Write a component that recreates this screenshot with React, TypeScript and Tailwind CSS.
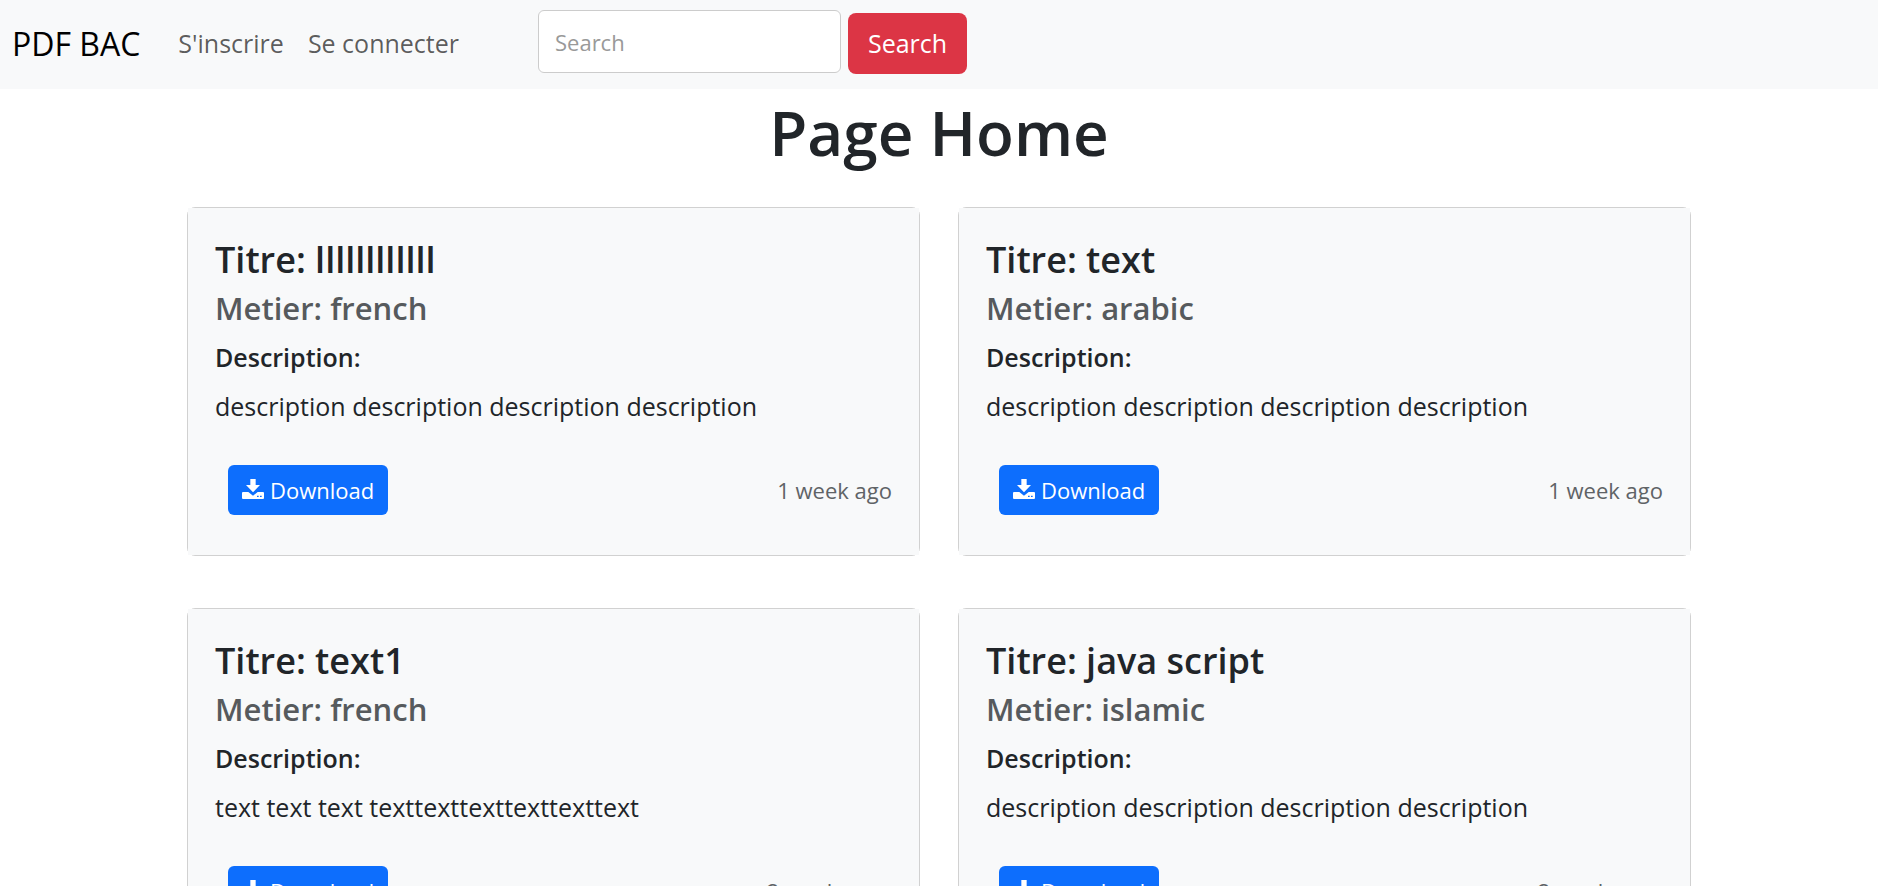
interface Doc {
  title: string;
  subject: string;
  description: string;
  age: string;
}

const docs: Doc[] = [
  { title: "llllllllllll", subject: "french", description: "description description description description", age: "1 week ago" },
  { title: "text", subject: "arabic", description: "description description description description", age: "1 week ago" },
  { title: "text1", subject: "french", description: "text text text texttexttexttexttexttext", age: "2 weeks ago" },
  { title: "java script", subject: "islamic", description: "description description description description", age: "2 weeks ago" },
];

function DownloadIcon() {
  return (
    <svg viewBox="0 0 66 60" className="-mt-[2px] h-5 w-[22px]" fill="currentColor" aria-hidden="true">
      <path d="M25 0h16v18h13L33 40 12 18h13z" />
      <path
        fillRule="evenodd"
        d="M3 39h16l14 11 14-11h16a3 3 0 0 1 3 3v15a3 3 0 0 1-3 3H3a3 3 0 0 1-3-3V42a3 3 0 0 1 3-3zM45 50v4h5v-4zM54 50v4h5v-4z"
      />
    </svg>
  );
}

function Navbar() {
  return (
    <nav className="flex items-center bg-[#f8f9fa] px-3 pt-[7px] pb-[9px]">
      <a href="#" className="text-[32px] leading-[73px] text-black">PDF BAC</a>
      <ul className="ml-[38px] flex gap-6 text-[25px] text-black/65">
        <li><a href="#">S'inscrire</a></li>
        <li><a href="#">Se connecter</a></li>
      </ul>
      <form className="ml-[79px] flex items-center gap-[7px]">
        <input
          type="search"
          aria-label="Search"
          placeholder="Search"
          className="mb-1 h-[63px] w-[303px] rounded-md border border-[#cccccc] bg-white px-4 text-[22px] placeholder:text-[#999999]"
        />
        <button type="button" className="h-[61px] rounded-lg bg-[#dc3545] px-5 text-[25px] text-white">Search</button>
      </form>
    </nav>
  );
}

function DocCard({ doc }: { doc: Doc }) {
  return (
    <article className="rounded-lg border border-black/18">
      <div className="bg-[#f8f9fa] px-[27px] pt-[27px] pb-10">
        <h2 className="text-[36px] leading-[49px] font-semibold">Titre: {doc.title}</h2>
        <h3 className="text-[31px] leading-[49px] font-semibold text-[#565a5d]">Metier: {doc.subject}</h3>
        <h4 className="text-[25px] leading-[49px] font-semibold">Description:</h4>
        <p className="text-[25px] leading-[49px]">{doc.description}</p>
        <div className="mt-[34px] flex items-center justify-between pl-[13px]">
          <button type="button" className="flex h-[50px] items-center gap-[6px] rounded-md bg-[#0d6efd] px-[14px] text-[22px] text-white">
            <DownloadIcon />
            Download
          </button>
          <span className="text-[22px] text-[#5f6366]">{doc.age}</span>
        </div>
      </div>
    </article>
  );
}

export default function App() {
  return (
    <div className="min-h-screen bg-white font-['Open_Sans',sans-serif] text-[#212529]">
      <Navbar />
      <main className="mx-auto w-full max-w-[1504px]">
        <h1 className="text-center text-[62px] leading-[86px] font-semibold">Page Home</h1>
        <div className="mt-8 grid grid-cols-2 gap-x-[38px] gap-y-[52px]">
          {docs.map((doc) => (
            <DocCard key={doc.title} doc={doc} />
          ))}
        </div>
      </main>
    </div>
  );
}
